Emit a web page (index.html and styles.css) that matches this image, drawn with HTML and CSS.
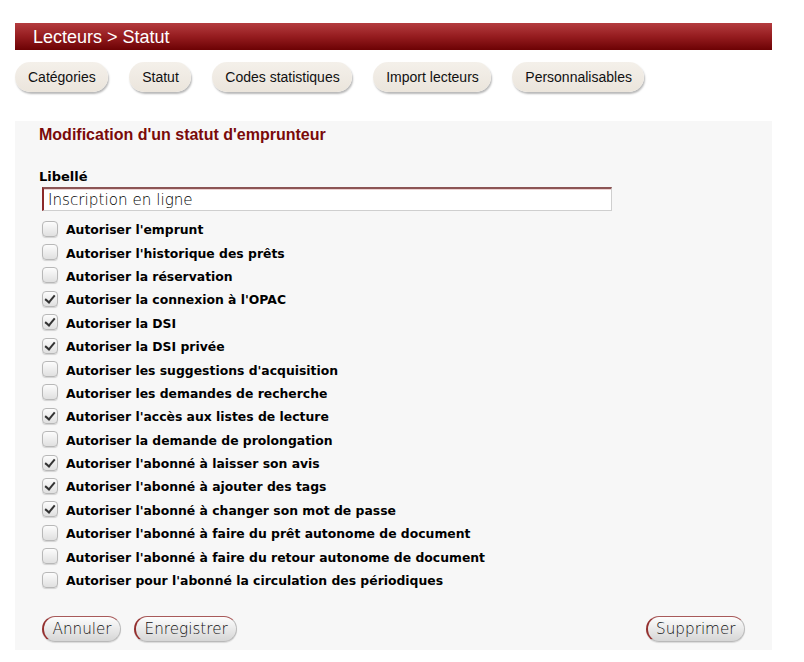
FILE: index.html
```html
<!DOCTYPE html>
<html lang="fr">
<head>
<meta charset="utf-8">
<title>Lecteurs &gt; Statut</title>
<link rel="stylesheet" href="styles.css">
</head>
<body>
<div class="page">
  <div class="header">Lecteurs &gt; Statut</div>
  <nav class="tabs">
    <span class="tab">Catégories</span>
    <span class="tab">Statut</span>
    <span class="tab">Codes statistiques</span>
    <span class="tab">Import lecteurs</span>
    <span class="tab">Personnalisables</span>
  </nav>
  <form class="panel">
    <h1 class="title">Modification d'un statut d'emprunteur</h1>
    <label class="field-label" for="lib">Libellé</label>
    <input class="text-input" id="lib" type="text" value="Inscription en ligne">
    <div class="checks">
      <label class="row"><input type="checkbox" class="cb"><span>Autoriser l'emprunt</span></label>
      <label class="row"><input type="checkbox" class="cb"><span>Autoriser l'historique des prêts</span></label>
      <label class="row"><input type="checkbox" class="cb"><span>Autoriser la réservation</span></label>
      <label class="row"><input type="checkbox" class="cb" checked><span>Autoriser la connexion à l'OPAC</span></label>
      <label class="row"><input type="checkbox" class="cb" checked><span>Autoriser la DSI</span></label>
      <label class="row"><input type="checkbox" class="cb" checked><span>Autoriser la DSI privée</span></label>
      <label class="row"><input type="checkbox" class="cb"><span>Autoriser les suggestions d'acquisition</span></label>
      <label class="row"><input type="checkbox" class="cb"><span>Autoriser les demandes de recherche</span></label>
      <label class="row"><input type="checkbox" class="cb" checked><span>Autoriser l'accès aux listes de lecture</span></label>
      <label class="row"><input type="checkbox" class="cb"><span>Autoriser la demande de prolongation</span></label>
      <label class="row"><input type="checkbox" class="cb" checked><span>Autoriser l'abonné à laisser son avis</span></label>
      <label class="row"><input type="checkbox" class="cb" checked><span>Autoriser l'abonné à ajouter des tags</span></label>
      <label class="row"><input type="checkbox" class="cb" checked><span>Autoriser l'abonné à changer son mot de passe</span></label>
      <label class="row"><input type="checkbox" class="cb"><span>Autoriser l'abonné à faire du prêt autonome de document</span></label>
      <label class="row"><input type="checkbox" class="cb"><span>Autoriser l'abonné à faire du retour autonome de document</span></label>
      <label class="row"><input type="checkbox" class="cb"><span>Autoriser pour l'abonné la circulation des périodiques</span></label>
    </div>
    <div class="actions">
      <div class="actions-left">
        <button type="button" class="btn">Annuler</button>
        <button type="button" class="btn">Enregistrer</button>
      </div>
      <button type="button" class="btn">Supprimer</button>
    </div>
  </form>
</div>
</body>
</html>
```

FILE: styles.css
```css
* { box-sizing: border-box; }

html, body {
  margin: 0;
  padding: 0;
  background: #ffffff;
}

body {
  font-family: "Liberation Sans", Arial, sans-serif;
  color: #111;
}

.page {
  width: 757px;
  margin: 23px 0 0 15px;
}

.header {
  height: 27px;
  line-height: 28px;
  padding-left: 18px;
  font-size: 18px;
  color: #ffffff;
  background: linear-gradient(to bottom, #b43c3f 0%, #951c1f 50%, #6c0204 100%);
}

.tabs {
  display: flex;
  gap: 21.5px;
  margin-top: 12px;
}

.tab {
  height: 30px;
  line-height: 30px;
  padding: 0 12px 0 13px;
  font-size: 14px;
  color: #111;
  border-radius: 15px;
  background: linear-gradient(to bottom, #f4f0ea, #ebe5dc);
  box-shadow: 1px 2px 2px rgba(0, 0, 0, 0.28);
}

.panel {
  margin: 29px 0 0 0;
  padding: 5px 27px 8px 24px;
  background: #f7f7f7;
}

.title {
  margin: 0;
  font-size: 16px;
  line-height: 18px;
  font-weight: bold;
  color: #7a0a0a;
}

.field-label {
  display: block;
  margin-top: 25px;
  font-family: "DejaVu Sans", Verdana, sans-serif;
  font-weight: bold;
  font-size: 13px;
  line-height: 15px;
  color: #000;
}

.text-input {
  display: block;
  width: 570px;
  height: 24px;
  margin: 3px 0 0 3px;
  padding: 0 4px;
  font-family: "DejaVu Sans", Verdana, sans-serif;
  font-weight: 200;
  font-size: 15.2px;
  color: #000;
  background: #fff;
  border: 1px solid #cfcfcf;
  border-top: 2px solid #8c5555;
  border-left: 2px solid #8c2a2a;
  box-shadow: inset 0 1px 0 #edd2d2;
  outline: none;
}

.checks {
  display: flex;
  flex-direction: column;
  margin-top: 7px;
  padding-left: 3px;
}

.row {
  display: flex;
  align-items: center;
  gap: 8px;
  height: 23.4px;
  font-family: "DejaVu Sans", Verdana, sans-serif;
  font-weight: bold;
  font-size: 12.4px;
  color: #000;
}

.cb {
  appearance: none;
  -webkit-appearance: none;
  position: relative;
  width: 16px;
  height: 16px;
  margin: -2px 0 0 0;
  border: 1px solid #b8b8b8;
  border-radius: 4px;
  background: linear-gradient(to bottom, #fcfcfc, #e0e0e0);
  box-shadow: 0 1px 1px rgba(0, 0, 0, 0.15);
  flex: none;
}

.cb:checked::after {
  content: "";
  position: absolute;
  left: 4px;
  top: 1px;
  width: 4px;
  height: 8px;
  border-right: 2px solid #333;
  border-bottom: 2px solid #333;
  transform: rotate(40deg);
}

.actions {
  display: flex;
  justify-content: space-between;
  align-items: center;
  margin-top: 24px;
  padding-left: 3px;
}

.actions-left {
  display: flex;
  gap: 13px;
}

.btn {
  height: 26px;
  padding: 0 8.5px;
  font-family: "DejaVu Sans", Verdana, sans-serif;
  font-weight: 200;
  font-size: 15.2px;
  color: #111;
  border-radius: 13px;
  border: 1px solid #b9b9b9;
  border-top-color: #a85a5a;
  border-left: 2px solid #94302f;
  background: linear-gradient(to bottom, #fdfdfd, #d6d6d6);
  box-shadow: 0 1px 1px rgba(0, 0, 0, 0.12);
}
```
